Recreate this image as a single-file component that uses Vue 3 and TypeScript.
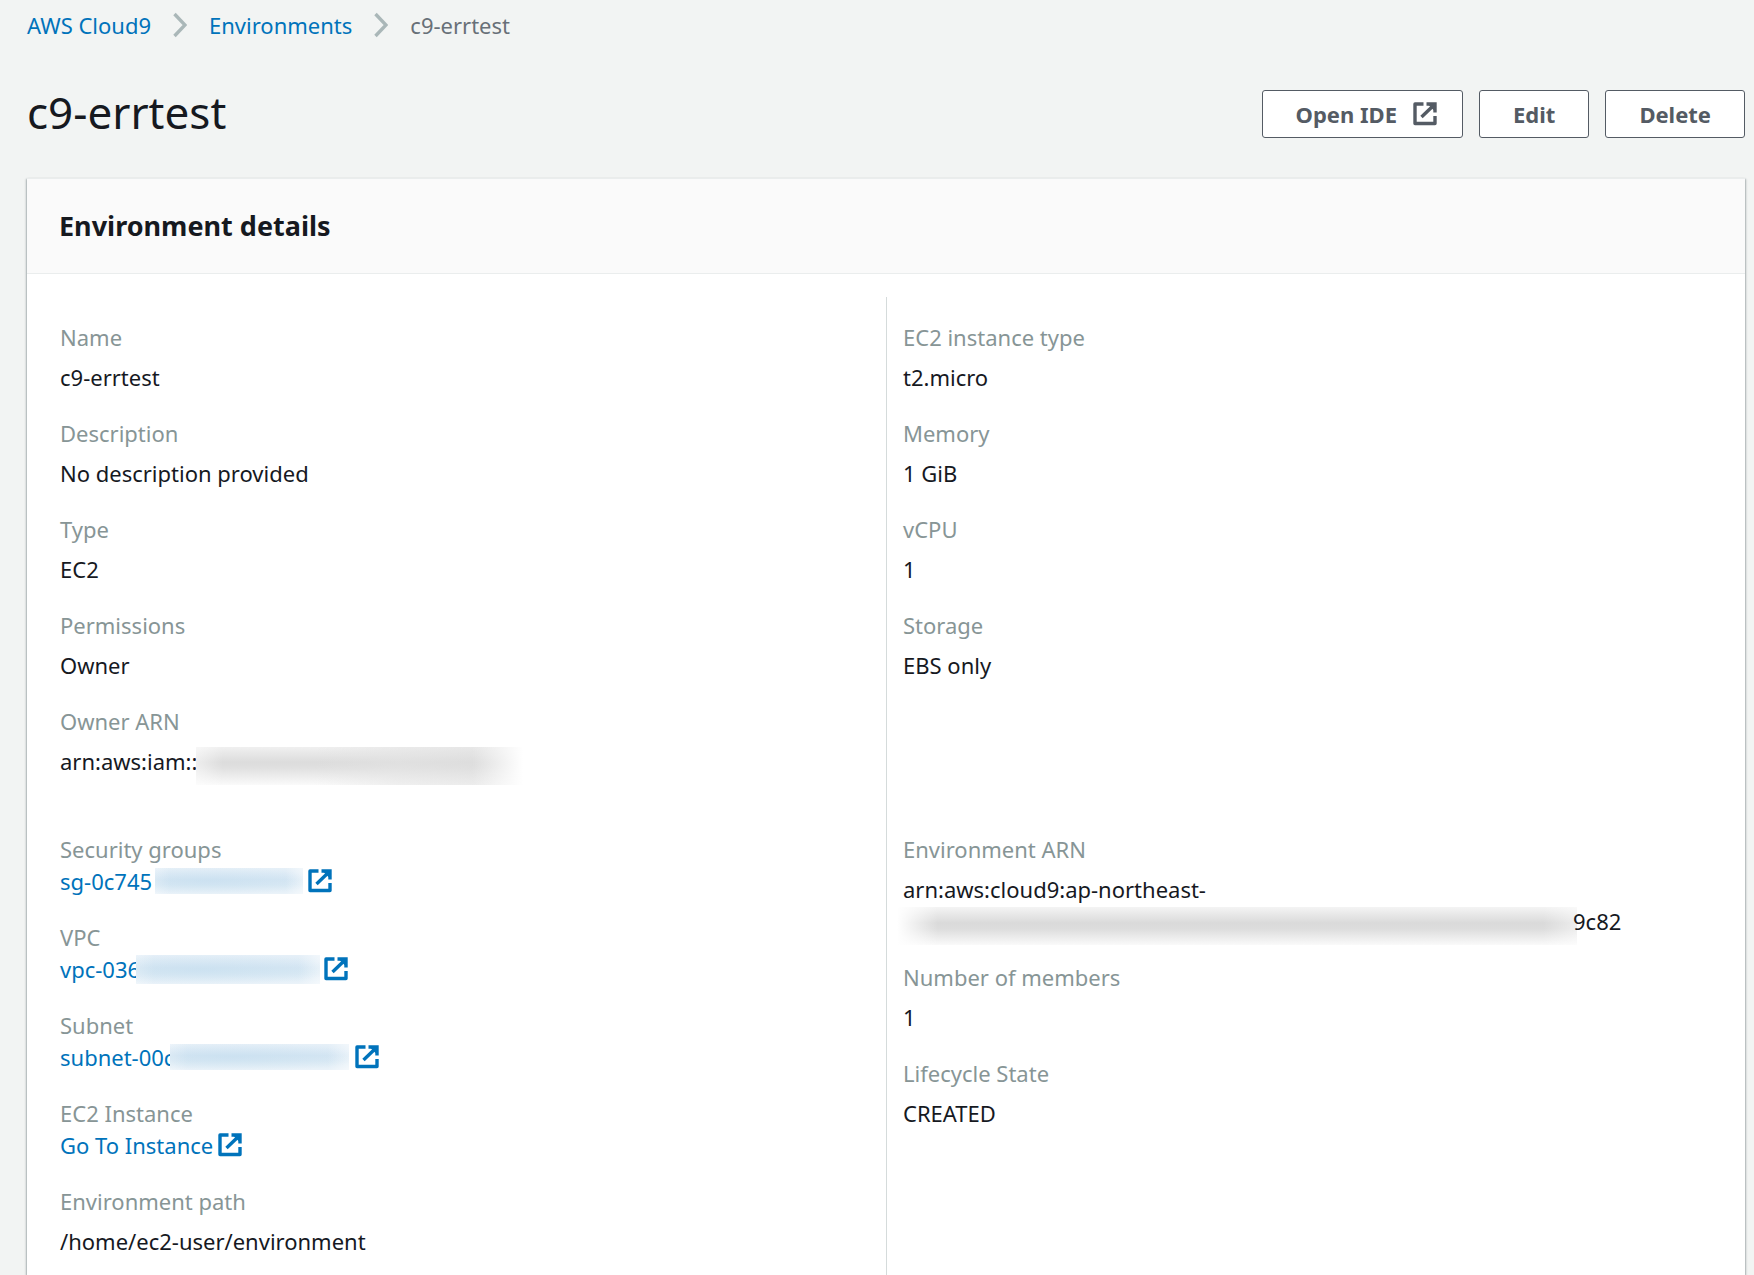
<script setup lang="ts">
import { h, type FunctionalComponent } from 'vue'

interface Mask {
  lead: number
  width: number
  size: 'small' | 'medium' | 'large'
}

interface Field {
  label: string
  value: string
  link?: boolean
  tall?: boolean
  mask?: Mask
  gap?: number
}

const ownerFields: Field[] = [
  { label: 'Name', value: 'c9-errtest' },
  { label: 'Description', value: 'No description provided' },
  { label: 'Type', value: 'EC2' },
  { label: 'Permissions', value: 'Owner' },
  { label: 'Owner ARN', value: 'arn:aws:iam::', tall: true, mask: { lead: 136, width: 337, size: 'large' } },
]

const instanceFields: Field[] = [
  { label: 'EC2 instance type', value: 't2.micro' },
  { label: 'Memory', value: '1 GiB' },
  { label: 'vCPU', value: '1' },
  { label: 'Storage', value: 'EBS only' },
]

const networkFields: Field[] = [
  { label: 'Security groups', value: 'sg-0c745', link: true, mask: { lead: 95, width: 148, size: 'small' }, gap: 5 },
  { label: 'VPC', value: 'vpc-036', link: true, mask: { lead: 76, width: 184, size: 'medium' }, gap: 4 },
  { label: 'Subnet', value: 'subnet-00c', link: true, mask: { lead: 110, width: 179, size: 'small' }, gap: 6 },
  { label: 'EC2 Instance', value: 'Go To Instance', link: true, gap: 5 },
  { label: 'Environment path', value: '/home/ec2-user/environment' },
]

const stateFields: Field[] = [
  { label: 'Number of members', value: '1' },
  { label: 'Lifecycle State', value: 'CREATED' },
]

const columns = [
  { top: ownerFields, bottom: networkFields, arn: false },
  { top: instanceFields, bottom: stateFields, arn: true },
]

const ExternalIcon: FunctionalComponent = () =>
  h(
    'svg',
    { width: 24, height: 24, viewBox: '0 0 24 24', fill: 'none', stroke: 'currentColor', 'stroke-width': 3.4, 'aria-hidden': 'true' },
    [
      h('path', { d: 'M10.5 2H2V21.5H22V14', 'stroke-linejoin': 'round' }),
      h('path', { d: 'M13.5 2H22V10.5M21.5 2.5L8.5 15' }),
      h('path', { d: 'M15 2.5H21.5V9Z', fill: 'currentColor', stroke: 'none' }),
    ],
  )
</script>

<template>
  <main class="page">
    <nav class="crumbs" aria-label="Breadcrumb">
      <a href="#">AWS Cloud9</a>
      <svg class="chevron" width="14" height="26" viewBox="0 0 14 26"><path d="M1.5 2L12 13L1.5 24" /></svg>
      <a href="#">Environments</a>
      <svg class="chevron" width="14" height="26" viewBox="0 0 14 26"><path d="M1.5 2L12 13L1.5 24" /></svg>
      <span>c9-errtest</span>
    </nav>

    <header class="title-row">
      <h1>c9-errtest</h1>
      <div class="actions">
        <button type="button">Open IDE <ExternalIcon /></button>
        <button type="button">Edit</button>
        <button type="button">Delete</button>
      </div>
    </header>

    <section class="card">
      <h2>Environment details</h2>
      <div class="columns">
        <div v-for="(column, i) in columns" :key="i" class="column">
          <dl class="group group-top">
            <div v-for="field in column.top" :key="field.label" class="field">
              <dt>{{ field.label }}</dt>
              <dd :class="{ tall: field.tall }">
                <span v-if="field.mask" class="lead" :style="{ width: field.mask.lead + 'px' }">{{ field.value }}</span>
                <template v-else>{{ field.value }}</template>
                <span v-if="field.mask" class="mask fade" :class="field.mask.size" :style="{ width: field.mask.width + 'px' }"></span>
              </dd>
            </div>
          </dl>
          <dl class="group">
            <div v-if="column.arn" class="field">
              <dt>Environment ARN</dt>
              <dd class="arn">
                <span>arn:aws:cloud9:ap-northeast-</span>
                <span class="arn-line"><span class="mask large arn-mask"></span><span class="arn-tail">9c82</span></span>
              </dd>
            </div>
            <div v-for="field in column.bottom" :key="field.label" class="field">
              <dt>{{ field.label }}</dt>
              <dd v-if="field.link" class="linked">
                <a href="#" :style="{ gap: field.gap + 'px' }">
                  <span class="secret">
                    <span class="lead" :style="{ width: field.mask ? field.mask.lead + 'px' : 'auto' }">{{ field.value }}</span>
                    <span v-if="field.mask" class="mask blue" :class="field.mask.size" :style="{ width: field.mask.width + 'px' }"></span>
                  </span>
                  <ExternalIcon />
                </a>
              </dd>
              <dd v-else>{{ field.value }}</dd>
            </div>
          </dl>
        </div>
      </div>
    </section>
  </main>
</template>

<style>
body {
  margin: 0;
  background: #f2f4f3;
}
</style>

<style scoped>
.page {
  box-sizing: border-box;
  min-height: 100vh;
  display: flex;
  flex-direction: column;
  padding: 9px 9px 0 27px;
  background: #f2f4f3;
  color: #16191f;
  font: 22px/32px "Noto Sans", sans-serif;
}

a {
  color: #0073bb;
  text-decoration: none;
}

.crumbs {
  display: flex;
  align-items: center;
  gap: 22px;
  color: #687078;
}

.chevron {
  fill: none;
  stroke: #aab7b8;
  stroke-width: 3.4;
}

.title-row {
  display: flex;
  justify-content: space-between;
  align-items: flex-start;
  margin: 49px 0 40px;
}

h1 {
  margin: 0;
  font-size: 44px;
  font-weight: 400;
  line-height: 44px;
}

.actions {
  display: flex;
  gap: 16px;
}

button {
  display: flex;
  align-items: center;
  gap: 16px;
  height: 48px;
  box-sizing: border-box;
  padding: 0 33px;
  border: 1px solid #545b64;
  border-radius: 3px;
  background: #fff;
  color: #545b64;
  font: 700 22px/32px "Noto Sans", sans-serif;
  white-space: nowrap;
}

button svg {
  margin-right: -8px;
}

.card {
  flex: 1;
  display: flex;
  flex-direction: column;
  border-top: 1px solid #eaeded;
  background: #fff;
  box-shadow: 0 1px 1px rgba(0, 28, 36, 0.3), 1px 1px 2px rgba(0, 28, 36, 0.25), -1px 1px 2px rgba(0, 28, 36, 0.25);
}

h2 {
  margin: 0;
  padding: 27px 32px;
  border-bottom: 1px solid #eaeded;
  background: #fafafa;
  font-size: 27px;
  font-weight: 700;
  line-height: 40px;
}

.columns {
  flex: 1;
  display: grid;
  grid-template-columns: 1fr 1fr;
  padding-top: 23px;
}

.column {
  padding-left: 33px;
}

.column + .column {
  padding-left: 16px;
  border-left: 1px solid #d5dbdb;
}

.group {
  margin: 0;
}

.group-top {
  min-height: 512px;
}

.field {
  padding-top: 24px;
}

dt {
  color: #879596;
}

dd {
  margin: 8px 0 0;
  min-height: 32px;
}

dd.linked {
  margin-top: 0;
}

dd.tall {
  display: flex;
  align-items: flex-start;
  min-height: 64px;
}

.linked a {
  display: inline-flex;
  align-items: center;
  vertical-align: top;
}

.secret {
  display: flex;
  align-items: center;
}

.lead {
  white-space: nowrap;
}

/* Opaque patch that hides the private part of an identifier. */
.mask {
  flex: none;
  height: 26px;
}

.mask.medium {
  height: 29px;
}

.mask.large {
  height: 38px;
  margin-top: 2px;
}

.mask.blue {
  background:
    radial-gradient(ellipse at 35% 50%, rgba(190, 218, 237, 0.4), rgba(190, 218, 237, 0) 80%),
    linear-gradient(90deg, rgba(255, 255, 255, 0.3), rgba(255, 255, 255, 0) 10%, rgba(255, 255, 255, 0) 88%, rgba(255, 255, 255, 0.5)),
    linear-gradient(#e6f0f8, #d5e6f3 45%, #d9e9f4 65%, #ebf3f9);
}

.mask.fade {
  background:
    linear-gradient(90deg, rgba(255, 255, 255, 0.5), rgba(255, 255, 255, 0) 8%, rgba(255, 255, 255, 0) 82%, #fff 97%),
    linear-gradient(90deg, rgba(228, 228, 228, 0) 35%, rgba(228, 228, 228, 0.5) 60%, rgba(222, 222, 222, 0.5) 85%),
    linear-gradient(#f0f0f0, #dcdcdc 40%, #e0e0e0 55%, #fafafa);
}

.arn {
  display: flex;
  flex-direction: column;
}

.arn-line {
  display: flex;
  height: 32px;
  margin-left: -6px;
}

.arn-mask {
  width: 680px;
  background:
    linear-gradient(90deg, #fff, rgba(255, 255, 255, 0) 6%, rgba(255, 255, 255, 0) 95%, rgba(255, 255, 255, 0.5)),
    linear-gradient(#f4f4f4, #dadada 42%, #dddddd 58%, #fafafa);
}

.arn-tail {
  margin-left: -4px;
}
</style>
